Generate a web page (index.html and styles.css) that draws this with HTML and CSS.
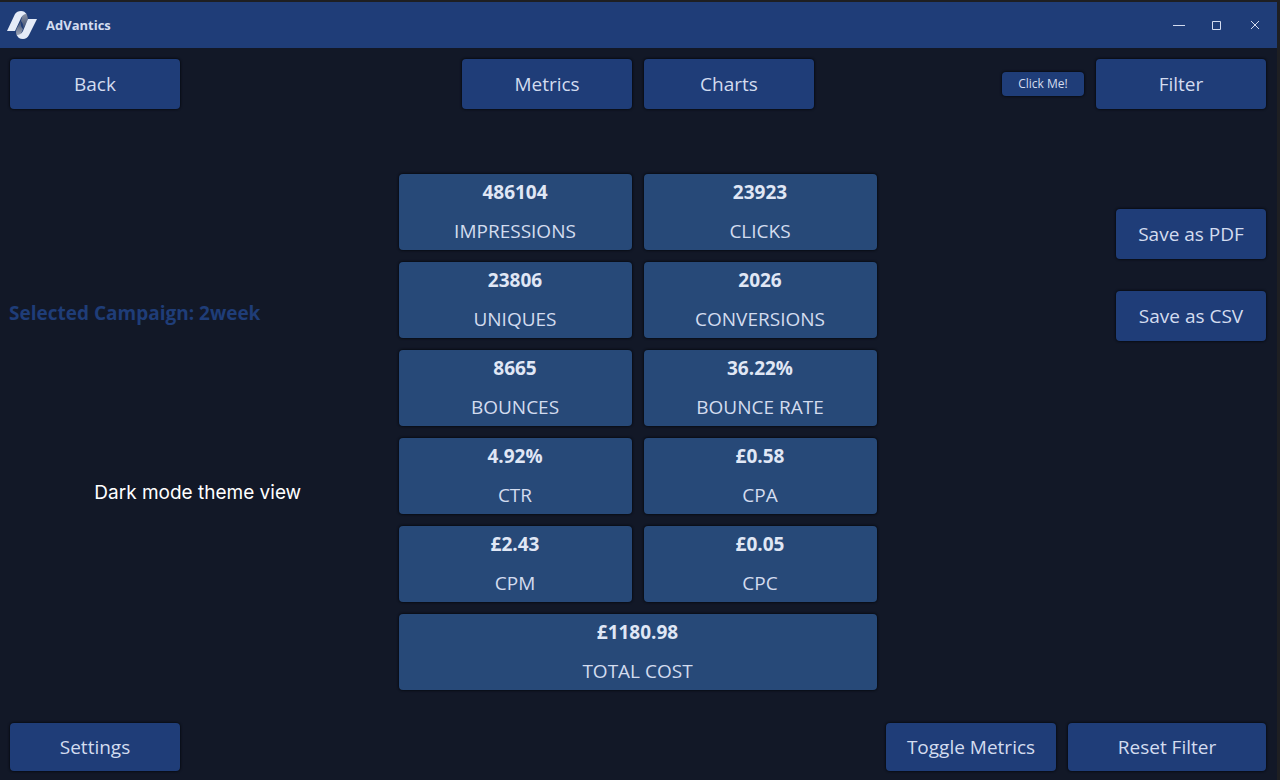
FILE: index.html
```html
<!DOCTYPE html>
<html lang="en">
<head>
<meta charset="utf-8">
<title>AdVantics</title>
<link rel="stylesheet" href="styles.css">
</head>
<body>
<div class="window">
  <header class="titlebar">
    <svg class="logo" width="30" height="30" viewBox="0 0 30 30" aria-hidden="true">
      <defs>
        <linearGradient id="fold-top" x1="0" y1="0" x2="0" y2="1">
          <stop offset="0" stop-color="#8f97a8"/>
          <stop offset="1" stop-color="#3c4c70"/>
        </linearGradient>
        <linearGradient id="fold-bottom" x1="0" y1="1" x2="0" y2="0">
          <stop offset="0" stop-color="#a4abba"/>
          <stop offset="1" stop-color="#3c4c70"/>
        </linearGradient>
      </defs>
      <path d="M16 3H19Q22 8 20 12L16 19Q17 14 14 11Z" fill="url(#fold-top)"/>
      <path d="M13 26H10Q8 22 10 18L14 11Q13 16 16 19Z" fill="url(#fold-bottom)"/>
      <path d="M0 21L8 4Q10 1 14 1Q18 1 19 4Q16 4 14 8L8 21Z" fill="#e4ebf8"/>
      <path d="M30 9L22 25Q20 29 16 29Q11 29 10 25Q14 25 16 21L21 9Z" fill="#e4ebf8"/>
    </svg>
    <h1 class="app-name">AdVantics</h1>
    <div class="window-controls">
      <button class="control" aria-label="Minimize"><svg width="12" height="12" viewBox="0 0 12 12"><path d="M0 6.5H12"/></svg></button>
      <button class="control" aria-label="Maximize"><svg width="12" height="12" viewBox="0 0 12 12"><path d="M1.500 2.500H9.500V10.500H1.500Z"/></svg></button>
      <button class="control" aria-label="Close"><svg width="12" height="12" viewBox="0 0 12 12"><path d="M2 2L10 10M10 2L2 10"/></svg></button>
    </div>
  </header>
  <nav class="toolbar">
    <div class="group"><button class="btn">Back</button></div>
    <div class="group"><button class="btn">Metrics</button><button class="btn">Charts</button></div>
    <div class="group group-end"><button class="btn btn-small">Click Me!</button><button class="btn">Filter</button></div>
  </nav>
  <main class="content">
    <section class="info">
      <p class="campaign">Selected Campaign: 2week</p>
      <p class="caption">Dark mode theme view</p>
    </section>
    <dl class="metrics">
      <div class="metric"><dd>486104</dd><dt>IMPRESSIONS</dt></div>
      <div class="metric"><dd>23923</dd><dt>CLICKS</dt></div>
      <div class="metric"><dd>23806</dd><dt>UNIQUES</dt></div>
      <div class="metric"><dd>2026</dd><dt>CONVERSIONS</dt></div>
      <div class="metric"><dd>8665</dd><dt>BOUNCES</dt></div>
      <div class="metric"><dd>36.22%</dd><dt>BOUNCE RATE</dt></div>
      <div class="metric"><dd>4.92%</dd><dt>CTR</dt></div>
      <div class="metric"><dd>£0.58</dd><dt>CPA</dt></div>
      <div class="metric"><dd>£2.43</dd><dt>CPM</dt></div>
      <div class="metric"><dd>£0.05</dd><dt>CPC</dt></div>
      <div class="metric metric-wide"><dd>£1180.98</dd><dt>TOTAL COST</dt></div>
    </dl>
    <section class="exports">
      <button class="btn btn-export">Save as PDF</button>
      <button class="btn btn-export">Save as CSV</button>
    </section>
  </main>
  <footer class="footer">
    <button class="btn btn-low">Settings</button>
    <div class="group"><button class="btn btn-low">Toggle Metrics</button><button class="btn btn-low btn-wide">Reset Filter</button></div>
  </footer>
</div>
</body>
</html>
```
FILE: styles.css
```css
* { box-sizing: border-box; }

body {
  margin: 0;
  min-height: 100vh;
  display: flex;
  padding: 2px 3px 0 0;
  background: #1e1f22;
  color: #d3dcef;
  font-family: "Open Sans", "Noto Sans", sans-serif;
  font-size: 19px;
  line-height: 28px;
}

h1, p, dl, dd, dt { margin: 0; }

.window {
  flex: 1;
  display: flex;
  flex-direction: column;
  background: #121827;
}

.titlebar {
  display: flex;
  align-items: center;
  height: 46px;
  padding: 0 10px 0 7px;
  background: #1f3d78;
}

.app-name {
  margin-left: 9px;
  font-size: 13px;
  line-height: 20px;
  font-weight: 700;
}

.window-controls {
  display: flex;
  gap: 14px;
  margin-left: auto;
}

.control {
  display: grid;
  place-items: center;
  width: 24px;
  height: 24px;
  padding: 0;
  border: 0;
  background: none;
}

.control path {
  fill: none;
  stroke: #d3dcef;
  stroke-width: 1;
}

.toolbar {
  display: grid;
  grid-template-columns: 1fr auto 1fr;
  padding: 11px 11px 0 10px;
}

.group {
  display: flex;
  align-items: center;
  gap: 12px;
}

.group-end { justify-content: flex-end; }

.btn {
  width: 170px;
  height: 50px;
  padding: 0;
  border: 0;
  border-radius: 4px;
  background: #1f3d78;
  box-shadow: 0 0 2px 1px #090d16;
  color: inherit;
  font: inherit;
}

.btn-small {
  width: 82px;
  height: 24px;
  font-size: 12px;
  line-height: 20px;
}

.btn-export { width: 150px; }
.btn-low { height: 48px; }
.btn-wide { width: 198px; }

.content {
  flex: 1;
  display: grid;
  grid-template-columns: 1fr 478px 1fr;
  column-gap: 12px;
  padding: 65px 11px 32px 9px;
}

.info { padding-top: 125px; }

.campaign {
  color: #1f3d78;
  font-weight: 700;
}

.caption {
  margin-top: 152px;
  color: #fff;
  font-family: Inter, sans-serif;
  text-align: center;
}

.metrics {
  display: grid;
  grid-template-columns: 1fr 1fr;
  align-content: start;
  gap: 12px;
}

.metric {
  display: flex;
  flex-direction: column;
  gap: 11px;
  height: 76px;
  padding-top: 4px;
  border-radius: 4px;
  background: #274978;
  box-shadow: 0 0 2px 1px #090d16;
  text-align: center;
}

.metric-wide { grid-column: span 2; }

.metric dd {
  color: #e0e7f5;
  font-weight: 700;
}

.exports {
  display: flex;
  flex-direction: column;
  align-items: flex-end;
  gap: 32px;
  padding-top: 35px;
}

.footer {
  display: flex;
  justify-content: space-between;
  padding: 0 11px 9px 10px;
}
```
